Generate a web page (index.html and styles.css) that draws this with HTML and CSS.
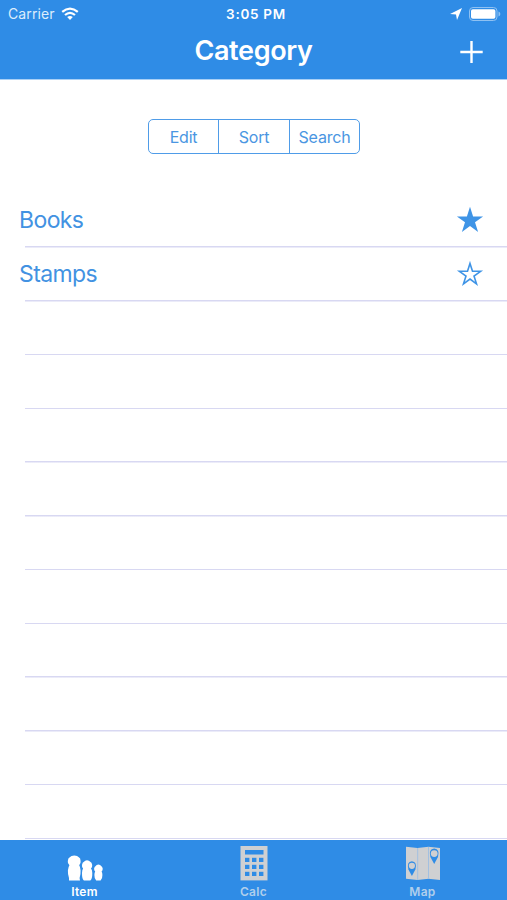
FILE: index.html
```html
<!DOCTYPE html>
<html lang="en">
<head>
  <meta charset="UTF-8">
  <title>Category</title>
  <link rel="stylesheet" href="styles.css">
</head>
<body>
  <header>
    <div class="status">
      <div class="carrier">
        <span>Carrier</span>
        <svg width="18" height="14" viewBox="0 0 18 14">
          <g fill="none" stroke="#fff" stroke-width="2.2">
            <path d="M1.2 4.9 Q9 -1.7 16.8 4.9"/>
            <path d="M4 8 Q9 3.6 14 8"/>
          </g>
          <path d="M9 13 L6.2 10.1 Q9 7.8 11.8 10.1 Z" fill="#fff"/>
        </svg>
      </div>
      <div class="clock">3:05 PM</div>
      <div class="power">
        <svg width="12" height="12" viewBox="0 0 12 12"><path d="M12 0 L7 12 L6 6.4 L0 6 Z" fill="#fff"/></svg>
        <svg width="32" height="14" viewBox="0 0 32 14">
          <rect x=".5" y=".5" width="27.5" height="13" rx="3.5" fill="none" stroke="#8fc1f2"/>
          <rect x="2" y="2.3" width="24.4" height="9.4" rx="1.8" fill="#fff"/>
          <path d="M29.5 4.6 Q31.4 5.4 31.4 7 Q31.4 8.6 29.5 9.4 Z" fill="#8fc1f2"/>
        </svg>
      </div>
    </div>
    <div class="nav">
      <h1>Category</h1>
      <svg class="add" width="24" height="24" viewBox="0 0 24 24"><path d="M12.5 1v22M1.3 12h22.4" stroke="#fff" stroke-width="2.4"/></svg>
    </div>
  </header>

  <main>
    <div class="segments">
      <button>Edit</button>
      <button>Sort</button>
      <button>Search</button>
    </div>

    <ul class="list">
      <li>
        <span>Books</span>
        <svg width="28" height="28" viewBox="0 0 28 28"><path d="M14 .8 L17.1 10.4 H27.1 L19 16.3 L22.1 26 L14 20 L5.9 26 L9 16.3 L.9 10.4 H10.9 Z" fill="#3f94e6"/></svg>
      </li>
      <li>
        <span>Stamps</span>
        <svg width="28" height="28" viewBox="0 0 28 28"><path d="M14 3.4 L16.5 11.3 H24.6 L18 16 L20.5 23.8 L14 19 L7.5 23.8 L10 16 L3.4 11.3 H11.5 Z" fill="none" stroke="#3f94e6" stroke-width="1.6"/></svg>
      </li>
      <li></li>
      <li></li>
      <li></li>
      <li></li>
      <li></li>
      <li></li>
      <li></li>
      <li></li>
      <li></li>
      <li></li>
    </ul>
  </main>

  <nav class="tabs">
    <a class="tab active">
      <svg width="38" height="36" viewBox="0.6 0 38 36" fill="#fff">
        <path d="M3.6 35.4 L3.6 33 Q2.3 29.5 2.5 25.5 Q2.8 22 4 20.2 Q2 18.6 2.4 16 Q2.6 13 4.4 12.2 Q5.6 10.6 8.9 10.6 Q12.2 10.6 13.4 12.2 Q15.2 13 15.2 16 Q15.6 18.6 13.8 20.2 Q15 22 15.2 25.5 Q15.4 29.5 14.2 33 L14.6 35.4 Z"/>
        <path d="M18.5 35.4 Q16.5 34 16.6 28 Q16.7 24.8 17.7 23.6 Q16.3 22.4 16.6 20 Q17 17.4 18.6 16.8 Q19.5 15.2 21.6 15.2 Q23.8 15.2 24.8 16.8 Q26.4 17.4 26.8 20 Q27 22.4 25.6 23.6 Q26.8 24.8 26.9 28 Q27 34 24.9 35.4 Z"/>
        <path d="M30.8 35.4 Q28.9 34 29 30 Q29 27.8 29.8 26.6 Q28.5 25.6 28.7 23.6 Q29 21.4 30.3 20.9 Q31 19.4 33 19.4 Q35 19.4 35.7 20.9 Q37 21.4 37.3 23.6 Q37.5 25.6 36.2 26.6 Q37 27.8 37 30 Q37.1 34 35.2 35.4 Z"/>
      </svg>
      <span>Item</span>
    </a>
    <a class="tab">
      <svg width="28" height="36" viewBox="0 0 28 36">
        <rect x=".5" y="1" width="27" height="34.4" fill="#cfd0d2"/>
        <g fill="#2f8ce6">
          <rect x="5" y="5" width="18.5" height="4.5"/>
          <rect x="5" y="12.8" width="4.4" height="4.2"/><rect x="12" y="12.8" width="4.4" height="4.2"/><rect x="19" y="12.8" width="4.4" height="4.2"/>
          <rect x="5" y="19.8" width="4.4" height="4.2"/><rect x="12" y="19.8" width="4.4" height="4.2"/><rect x="19" y="19.8" width="4.4" height="4.2"/>
          <rect x="5" y="26.8" width="4.4" height="4.2"/><rect x="12" y="26.8" width="4.4" height="4.2"/><rect x="19" y="26.8" width="4.4" height="4.2"/>
        </g>
      </svg>
      <span>Calc</span>
    </a>
    <a class="tab">
      <svg width="36" height="36" viewBox="0 0 36 36">
        <path d="M1 1.8 L12.5 3 L23.5 1.8 L35 3 V35 L23.5 33.8 L12.5 35 L1 33.8 Z" fill="#cfd0d2"/>
        <path d="M12.7 3V35M23.5 2V34" stroke="#a3c0e0" stroke-width="1"/>
        <g fill="#2f8ce6">
          <path d="M6.9 31 L3.4 24.5 Q1.4 16.6 6.9 16.2 Q12.4 16.6 10.4 24.5 Z"/>
          <path d="M29.2 19 L25.4 12 Q23.2 4 29.2 3.5 Q35.2 4 33 12 Z"/>
        </g>
        <circle cx="6.9" cy="20.8" r="3.1" fill="#cfd0d2"/>
        <circle cx="29.2" cy="8.6" r="3.4" fill="#cfd0d2"/>
      </svg>
      <span>Map</span>
    </a>
  </nav>
</body>
</html>
```

FILE: styles.css
```css
* {
  box-sizing: border-box;
}

body {
  margin: 0;
  height: 900px;
  display: flex;
  flex-direction: column;
  overflow: hidden;
  background: #fff;
  font-family: Inter, "Liberation Sans", sans-serif;
  color: #4292e2;
}

svg {
  display: block;
  flex: none;
}

header {
  height: 80px;
  background: #2f8ce6;
  border-bottom: 1px solid #a9d0f6;
  color: #fff;
}

.status {
  display: grid;
  grid-template-columns: 1fr auto 1fr;
  align-items: center;
  height: 27px;
  padding: 0 6px 0 8px;
}

.carrier {
  display: flex;
  align-items: center;
  gap: 6px;
  font-size: 14px;
  letter-spacing: 0.1px;
  color: #dcecfc;
}

.clock {
  margin-left: 3px;
  font-size: 13.5px;
  font-weight: 600;
  letter-spacing: 0.7px;
}

.power {
  display: flex;
  align-items: center;
  justify-content: flex-end;
  gap: 7px;
}

.nav {
  display: grid;
  grid-template-columns: 1fr auto 1fr;
  align-items: center;
  height: 48px;
  padding: 0 24px;
}

h1 {
  grid-column: 2;
  margin: 0;
  font-size: 27px;
  line-height: 32px;
  font-weight: 600;
  letter-spacing: -0.35px;
}

.add {
  justify-self: end;
  margin-top: 2px;
}

main {
  flex: 1;
  min-height: 0;
}

.segments {
  display: grid;
  grid-template-columns: 69px 71px 1fr;
  width: 212px;
  height: 35px;
  margin: 39px auto 40px 148px;
  border: 1px solid #4f9ce8;
  border-radius: 5px;
}

.segments button {
  padding: 0;
  border: none;
  border-left: 1px solid #4f9ce8;
  background: none;
  font: 16px Inter, "Liberation Sans", sans-serif;
  letter-spacing: -0.2px;
  color: #4a96e2;
}

.segments button:first-child {
  border-left: none;
}

.list {
  margin: 0;
  padding: 0;
  list-style: none;
}

.list li {
  display: flex;
  justify-content: space-between;
  align-items: center;
  height: 53.75px;
  padding: 0 23px 2px 19px;
  background: linear-gradient(#d8d8f2, #d8d8f2) 25px 100% / 100% 1.5px no-repeat;
  font-size: 23px;
  letter-spacing: -0.6px;
}

.tabs {
  display: grid;
  grid-template-columns: repeat(3, 1fr);
  height: 60px;
  background: #2f8ce6;
}

.tab {
  display: flex;
  flex-direction: column;
  align-items: center;
  padding-top: 5px;
  font-size: 12px;
  font-weight: 600;
  line-height: 21px;
  letter-spacing: 0.3px;
  color: #b0cfec;
}

.tab.active {
  color: #fff;
}
```
